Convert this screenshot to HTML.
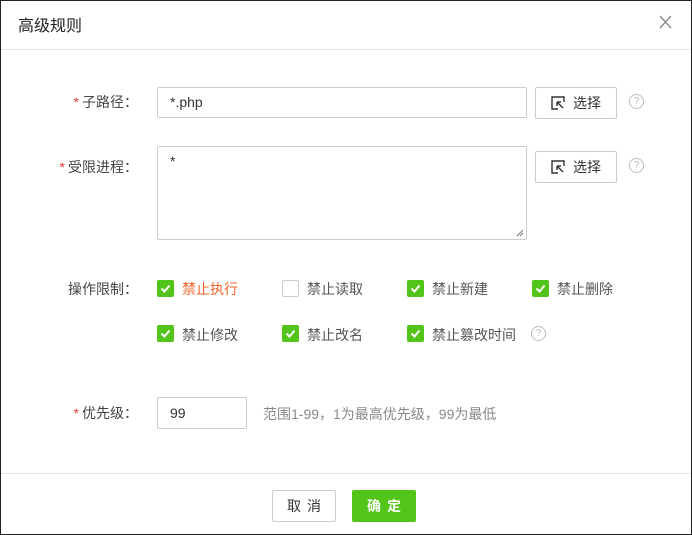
<!DOCTYPE html>
<html><head><meta charset="utf-8"><style>
*{box-sizing:border-box;margin:0;padding:0}
body{width:692px;height:535px;background:#fff;font-family:"Liberation Sans","Noto Sans CJK SC",sans-serif;font-size:14px;color:#333;position:relative;overflow:hidden}
.frame{position:absolute;left:0;top:0;width:692px;height:535px;border:1px solid #222}
.a{position:absolute}
.title{left:18px;top:12px;font-size:16px;color:#222}
.hr{left:1px;right:1px;height:1px;background:#e5e5e5}
.lbl{color:#444;text-align:right;width:138px;left:0}
.req{color:#e4393c;margin-right:3px}
.inp{border:1px solid #ccc;border-radius:2px;background:#fff;padding-left:12px;color:#333}
.btn{border:1px solid #ccc;border-radius:2px;background:#fff;color:#333;display:flex;align-items:center;justify-content:center}
.help{width:15px;height:15px;border:1px solid #bbb;border-radius:50%;color:#bbb;font-size:10px;text-align:center;line-height:13px}
.cb{width:17px;height:17px;border-radius:2px;background:#52c41a}
.cb.off{background:#fff;border:1px solid #ccc}
.cbt{color:#555}
</style></head><body>
<div class="frame"></div>
<div class="a title">高级规则</div>
<svg class="a" style="left:659px;top:15px" width="13" height="14"><path d="M1 1L12 13M12 1L1 13" stroke="#888" stroke-width="1.3" fill="none"/></svg>
<div class="a hr" style="top:49px"></div>

<div class="a lbl" style="top:92px"><span class="req">*</span>子路径：</div>
<div class="a inp" style="left:157px;top:87px;width:370px;height:31px;line-height:29px">*.php</div>
<div class="a btn" style="left:535px;top:87px;width:82px;height:32px">
<svg width="14" height="14" viewBox="0 0 14 14" style="margin-right:8px"><path d="M7 1H1v12h6M7 1h6v5" fill="none" stroke="#333" stroke-width="1.4"/><path d="M6 6l6 6M6 6v4M6 6h4" fill="none" stroke="#333" stroke-width="1.4"/></svg>选择</div>
<div class="a help" style="left:629px;top:94px">?</div>

<div class="a lbl" style="top:157px"><span class="req">*</span>受限进程：</div>
<div class="a inp" style="left:157px;top:146px;width:370px;height:94px;padding-top:6px">*
<svg class="a" style="right:2px;bottom:2px" width="8" height="8"><path d="M1 7L7 1M4 7L7 4" stroke="#777"/></svg></div>
<div class="a btn" style="left:535px;top:151px;width:82px;height:32px">
<svg width="14" height="14" viewBox="0 0 14 14" style="margin-right:8px"><path d="M7 1H1v12h6M7 1h6v5" fill="none" stroke="#333" stroke-width="1.4"/><path d="M6 6l6 6M6 6v4M6 6h4" fill="none" stroke="#333" stroke-width="1.4"/></svg>选择</div>
<div class="a help" style="left:629px;top:158px">?</div>

<div class="a lbl" style="top:279px">操作限制：</div>
<svg width="0" height="0" style="position:absolute"><defs><symbol id="ck" viewBox="0 0 17 17"><path d="M4.5 8.5l3 3 5-6" fill="none" stroke="#fff" stroke-width="2"/></symbol></defs></svg>

<div class="a cb" style="left:157px;top:280px"><svg width="17" height="17"><use href="#ck"/></svg></div><div class="a cbt" style="left:182px;top:279px;color:#f5632a">禁止执行</div>
<div class="a cb off" style="left:282px;top:280px"></div><div class="a cbt" style="left:307px;top:279px">禁止读取</div>
<div class="a cb" style="left:407px;top:280px"><svg width="17" height="17"><use href="#ck"/></svg></div><div class="a cbt" style="left:432px;top:279px">禁止新建</div>
<div class="a cb" style="left:532px;top:280px"><svg width="17" height="17"><use href="#ck"/></svg></div><div class="a cbt" style="left:557px;top:279px">禁止删除</div>

<div class="a cb" style="left:157px;top:325px"><svg width="17" height="17"><use href="#ck"/></svg></div><div class="a cbt" style="left:182px;top:325px">禁止修改</div>
<div class="a cb" style="left:282px;top:325px"><svg width="17" height="17"><use href="#ck"/></svg></div><div class="a cbt" style="left:307px;top:325px">禁止改名</div>
<div class="a cb" style="left:407px;top:325px"><svg width="17" height="17"><use href="#ck"/></svg></div><div class="a cbt" style="left:432px;top:325px">禁止篡改时间</div>
<div class="a help" style="left:531px;top:326px">?</div>

<div class="a lbl" style="top:403px"><span class="req">*</span>优先级：</div>
<div class="a inp" style="left:157px;top:397px;width:90px;height:32px;line-height:30px;padding-left:12px">99</div>
<div class="a" style="left:263px;top:404px;color:#888">范围1-99，1为最高优先级，99为最低</div>

<div class="a hr" style="top:473px"></div>
<div class="a btn" style="left:272px;top:490px;width:64px;height:32px;letter-spacing:6px;padding-left:6px">取消</div>
<div class="a btn" style="left:352px;top:490px;width:64px;height:32px;background:#52c41a;border-color:#52c41a;color:#fff;font-weight:bold;letter-spacing:6px;padding-left:6px">确定</div>
</body></html>
